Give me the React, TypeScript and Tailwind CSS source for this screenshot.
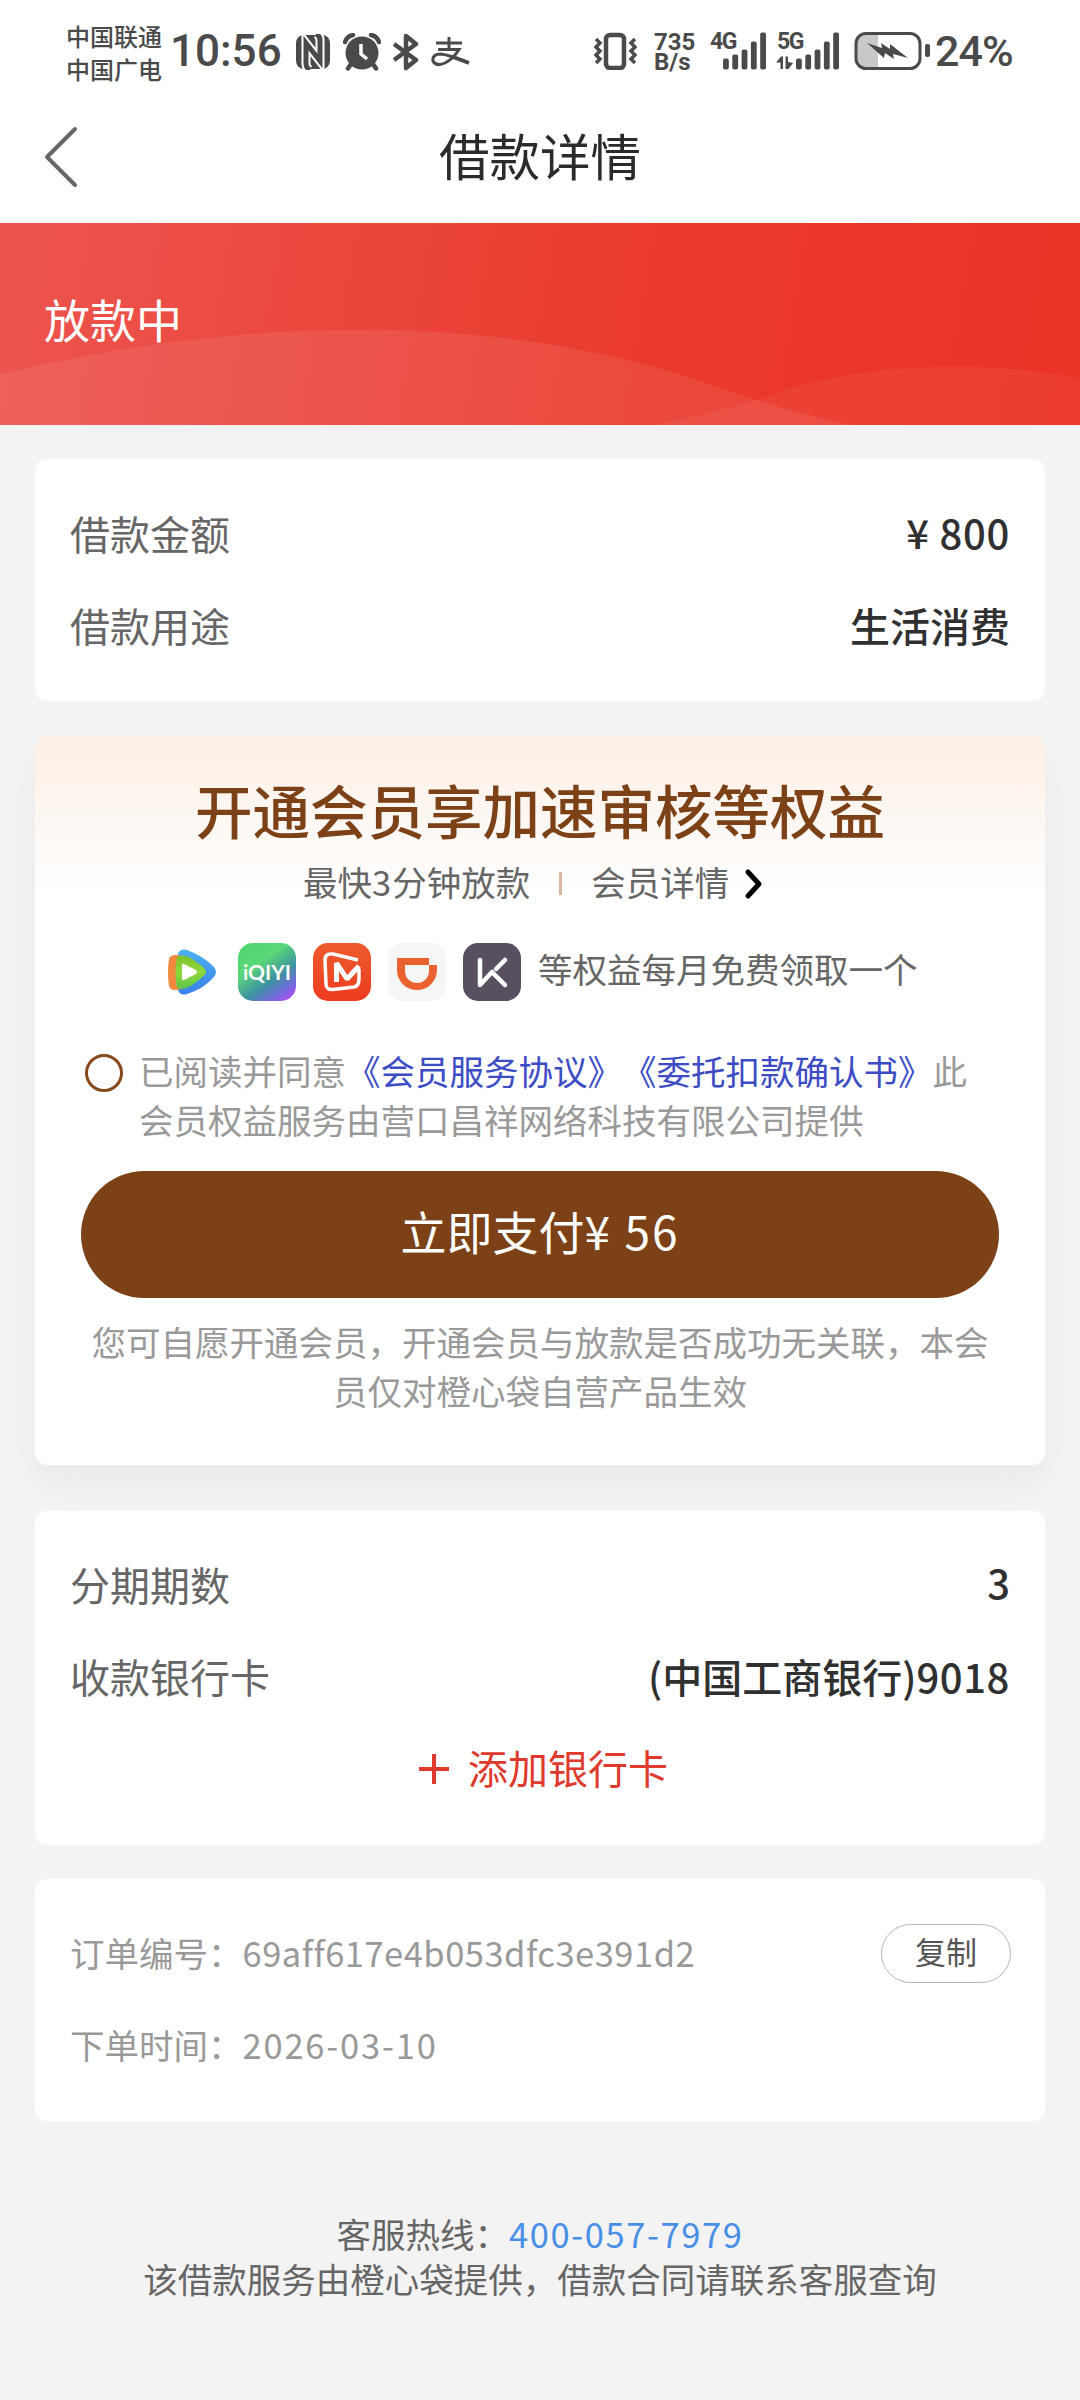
import clsx from "clsx";
import React from "react";

const Signal = ({ label, data }: { label: string; data?: boolean }) => {
   const bars = [11, 15, 20, 28, 37];
   return (
      <div className="w-[64px] h-[38px] flex">
         <div className="w-[13px]">
            <p className="text-[23px] leading-[19px] font-bold tracking-[-1.500px]">
               {label}
            </p>
            {data && (
               <svg width="17" height="14" viewBox="0 0 17 14" fill="currentColor" className="mt-[5px] -ml-px max-w-none">
                  <path d="M0 6.500L5 0.500H7V13H4.500V6.500ZM9.500 0.500H12V6L17 7L12.500 13H9.500Z" />
               </svg>
            )}
         </div>
         <svg
            width="44"
            height="38"
            viewBox="0 0 44 38"
            fill="currentColor"
            className={data ? "ml-[6px]" : ""}
         >
            {bars.map((h, i) => (
               <rect
                  key={h}
                  x={i * 9.3}
                  y={37.5 - h}
                  width="5.8"
                  height={h}
                  rx="2"
               />
            ))}
         </svg>
      </div>
   );
};

const StatusBar = () => {
   return (
      <div className="h-[90px] pl-[66px] pr-[68px] pt-[20px] flex items-start justify-between text-[#4a4a4a]">
         <div className="flex items-start">
            <div className="w-[104px] -mt-px text-[24px] leading-[33px] font-medium">
               <p>中国联通</p>
               <p>中国广电</p>
            </div>
            <span className="w-[125px] font-['Roboto'] text-[44px] leading-[62px] font-medium">
               10:56
            </span>
            <div className="flex items-center gap-[12px] pt-[13px]">
               <svg width="36" height="36" viewBox="0 0 36 36">
                  <rect x="1" y="1" width="34" height="34" rx="8" fill="currentColor" />
                  <path
                     d="M15 36Q11 34 11 30V9L25 27V6Q25 2 21 0"
                     fill="none"
                     stroke="#fff"
                     strokeWidth="9"
                  />
                  <path
                     d="M15 36Q11 34 11 30V9L25 27V6Q25 2 21 0"
                     fill="none"
                     stroke="currentColor"
                     strokeWidth="5"
                  />
               </svg>
               <svg width="38" height="38" viewBox="0 0 38 38">
                  <circle cx="19" cy="20" r="16.5" fill="currentColor" />
                  <path
                     d="M2 9Q4 3 10 2M36 9Q34 3 28 2M8 31L5 35.500M30 31L33 35.500"
                     fill="none"
                     stroke="currentColor"
                     strokeWidth="4.500"
                     strokeLinecap="round"
                  />
                  <path
                     d="M18 11V21L24 26"
                     fill="none"
                     stroke="#fff"
                     strokeWidth="3.500"
                  />
               </svg>
               <svg
                  width="26"
                  height="38"
                  viewBox="0 0 26 38"
                  fill="none"
                  stroke="currentColor"
                  strokeWidth="4.500"
                  strokeLinejoin="round"
               >
                  <path d="M1 11L23 27L13 35V3L23 11L1 27" />
               </svg>
               <svg
                  width="39"
                  height="30"
                  viewBox="0 0 39 30"
                  fill="none"
                  stroke="currentColor"
                  strokeWidth="3"
               >
                  <path d="M5 6H31M18 0V12M7 12.500H28Q22 22 14 26Q5 30 2 24Q1 17 10 17Q18 18 36 25" />
                  <path d="M22 20L38 26" strokeWidth="4" />
               </svg>
            </div>
         </div>
         <div className="flex items-start pt-[12px]">
            <svg
               width="43"
               height="38"
               viewBox="0 0 43 38"
               fill="none"
               stroke="currentColor"
               className="mr-[17px]"
            >
               <rect x="12" y="3" width="18" height="33" rx="4" strokeWidth="4.500" />
               <path
                  d="M2 7L6 11L2 15L6 19L2 23L6 27L2 31M41 7L37 11L41 15L37 19L41 23L37 27L41 31"
                  strokeWidth="3.500"
               />
            </svg>
            <div className="w-[56px] font-['Roboto'] text-[24px] leading-[20px] font-bold">
               <p>735</p>
               <p>B/s</p>
            </div>
            <div className="w-[67px] font-['Roboto']">
               <Signal label="4G" />
            </div>
            <div className="w-[77px] font-['Roboto']">
               <Signal label="5G" data />
            </div>
            <svg width="78" height="38" viewBox="0 0 78 38" className="mr-[3px]">
               <path d="M11 3H24V35H11Q3 35 3 27V11Q3 3 11 3Z" fill="#c8c8c8" />
               <rect
                  x="2"
                  y="1.500"
                  width="64"
                  height="35"
                  rx="10"
                  fill="none"
                  stroke="currentColor"
                  strokeWidth="3"
               />
               <rect x="71" y="12" width="5" height="13" rx="2" fill="currentColor" />
               <path
                  d="M13 11L28 16L27 11L36 17L36 12L54 26L39 22L40 27L31 21L30 26Z"
                  fill="currentColor"
               />
            </svg>
            <span className="w-[77px] -mt-[12px] font-['Roboto'] text-[43px] leading-[62px] font-medium tracking-[-1px]">
               24%
            </span>
         </div>
      </div>
   );
};

const Header = () => {
   return (
      <div className="h-[133px] px-[44px] flex items-center">
         <svg
            width="35"
            height="64"
            viewBox="0 0 35 64"
            fill="none"
            stroke="#666"
            strokeWidth="4"
            strokeLinecap="round"
            strokeLinejoin="round"
         >
            <path d="M31 4L3 32L31 60" />
         </svg>
         <h1 className="flex-1 pr-[35px] pb-[6px] text-center text-[50.500px] leading-[60px] text-[#2b2b2b]">
            借款详情
         </h1>
      </div>
   );
};

const Banner = () => {
   return (
      <div className="relative h-[202px] bg-linear-[100deg,#ec554e_0%,#ea3a2d_60%,#eb3225_100%]">
         <svg
            width="1080"
            height="202"
            viewBox="0 0 1080 202"
            fill="#fff"
            fillOpacity="0.08"
            className="absolute inset-0"
         >
            <path d="M0 151C220 98 480 84 700 158Q790 190 852 202H0Z" />
            <path d="M655 202Q705 192 760 176C860 137 980 137 1080 155V202Z" fillOpacity="0.05" />
         </svg>
         <p className="relative pl-[44px] pt-[64px] text-[46px] leading-[62px] text-white">
            放款中
         </p>
      </div>
   );
};

const Card = ({
   className,
   children,
}: {
   className?: string;
   children: React.ReactNode;
}) => {
   return (
      <div className={clsx("mx-[35px] rounded-[12px] bg-white", className)}>
         {children}
      </div>
   );
};

const Row = ({ label, value }: { label: string; value: React.ReactNode }) => {
   return (
      <div className="h-[92px] flex items-center justify-between text-[40px] whitespace-nowrap">
         <span className="text-[#666]">{label}</span>
         <span className="text-[#303030] font-medium">{value}</span>
      </div>
   );
};

const AppIcons = () => {
   return (
      <div className="flex gap-[17px]">
         <svg width="58" height="58" viewBox="0 0 58 58">
            <defs>
               <linearGradient id="blue" x1="0" y1="0" x2="0" y2="1">
                  <stop offset="0" stopColor="#4cb0f0" />
                  <stop offset="1" stopColor="#3a80ea" />
               </linearGradient>
               <linearGradient id="green" x1="0" y1="0" x2="0" y2="1">
                  <stop offset="0" stopColor="#7fc02e" />
                  <stop offset="0.5" stopColor="#8fd93a" />
                  <stop offset="1" stopColor="#5cc44a" />
               </linearGradient>
            </defs>
            <path d="M15 11Q17 5 24 7Q40 13 50 23Q56 29 50 35Q40 46 24 51Q17 53 15 47Q12 29 15 11Z" fill="url(#blue)" />
            <path d="M6 16Q7 12 13 12Q19 12 25 15V43Q18 47 12 47Q7 47 6 43Q4 29 6 16Z" fill="#f18a3c" />
            <path d="M14 14Q22 10 32 18Q44 26 43 29Q43 32 32 40Q22 48 14 45Q11 29 14 14Z" fill="url(#green)" />
            <path d="M19 22Q19 20 21 21L33 27Q35 29 33 31L21 37Q19 38 19 36Z" fill="#fff" />
         </svg>
         <div className="size-[58px] rounded-[15px] flex items-center justify-center bg-linear-[145deg,#4fd670_0%,#5ad878_35%,#3d92a0_62%,#6f6cd8_80%,#b04cf5_94%] text-white">
            <span className="font-['Lato'] text-[21px] leading-[58px] font-bold">
               iQIYI
            </span>
         </div>
         <svg
            width="58"
            height="58"
            viewBox="0 0 58 58"
            className="rounded-[15px] bg-linear-to-b from-[#ec5a2c] to-[#ee3a20]"
            fill="none"
            stroke="#fff"
         >
            <path d="M45 17L20 11Q12 10 12 17L13 41Q13 47 20 46.500L41 44Q46 43 46 36V26" strokeWidth="3.500" />
            <path d="M23.500 39V20L34 36L46 23" strokeWidth="5" strokeLinejoin="bevel" />
         </svg>
         <svg
            width="58"
            height="58"
            viewBox="0 0 58 58"
            className="rounded-[15px] bg-[#f6f6f6]"
         >
            <path d="M9 15H41V22H49V27A20 20 0 0 1 9 27Z" fill="#ea6230" />
            <path d="M17 22H41V28A12 12 0 0 1 17 28Z" fill="#f6f6f6" />
         </svg>
         <svg
            width="58"
            height="58"
            viewBox="0 0 58 58"
            className="rounded-[15px] bg-[#584f60]"
            fill="none"
            stroke="#fff"
            strokeWidth="4.500"
            strokeLinecap="round"
            strokeLinejoin="round"
         >
            <path d="M17 17V42L29 29L42 42M33 26L42 17" />
         </svg>
      </div>
   );
};

const MemberCard = () => {
   return (
      <Card className="mt-[35px] h-[729px] pt-[38px] bg-linear-to-b from-[#fcefe5] to-white to-[160px] shadow-[0_20px_40px_rgba(0,0,0,0.04)]">
         <h2 className="text-center text-[57.500px] leading-[70px] font-medium text-[#7c4116]">
            开通会员享加速审核等权益
         </h2>
         <div className="mt-[13px] h-[50px] pl-[268px] flex items-center text-[34.500px] text-[#666]">
            <span>
               最快<span className="tracking-[1px]">3</span>分钟放款
            </span>
            <span className="ml-[29px] mr-[29px] mt-[2px] w-[3px] h-[23px] bg-[#d8b8a2]"></span>
            <span>会员详情</span>
            <svg
               width="20"
               height="32"
               viewBox="0 0 20 32"
               className="ml-[15px] mt-[4px]"
               fill="none"
               stroke="#000"
               strokeWidth="5"
               strokeLinecap="round"
               strokeLinejoin="round"
            >
               <path d="M4 4L15 16L4 28" />
            </svg>
         </div>
         <div className="mt-[36px] pl-[128px] flex items-center">
            <AppIcons />
            <span className="ml-[17px] text-[34.500px] leading-[50px] -mt-[8px] text-[#666]">
               等权益每月免费领取一个
            </span>
         </div>
         <div className="mt-[45px] pl-[50px] flex items-start">
            <span className="mt-[8px] size-[38px] rounded-full border-[3px] border-[#85491d]"></span>
            <p className="ml-[16px] text-[34.500px] leading-[49px] text-[#999] whitespace-nowrap [text-spacing-trim:space-all]">
               已阅读并同意
               <span className="text-[#3c4cc4]">
                  《会员服务协议》《委托扣款确认书》
               </span>
               此<br />
               会员权益服务由营口昌祥网络科技有限公司提供
            </p>
         </div>
         <button className="mt-[27px] ml-[46px] w-[918px] h-[127px] pb-[9px] rounded-full bg-[#7c4116] text-white text-[46px]">
            立即支付<span className="tracking-[2px]">¥ 56</span>
         </button>
         <p className="mt-[19px] text-center text-[34.500px] leading-[49px] text-[#999] [text-spacing-trim:space-all]">
            您可自愿开通会员，开通会员与放款是否成功无关联，本会
            <br />
            员仅对橙心袋自营产品生效
         </p>
      </Card>
   );
};

const App = () => {
   return (
      <div className="w-[1080px] h-[2400px] overflow-hidden bg-[#f3f3f3] font-['Noto_Sans_CJK_SC',sans-serif]">
         <div className="bg-white">
            <StatusBar />
            <Header />
         </div>
         <Banner />
         <Card className="mt-[34px] h-[242px] px-[35px] pt-[28px]">
            <Row
               label="借款金额"
               value={<p className="pb-[3px] tracking-[0.7px]">¥ 800</p>}
            />
            <Row label="借款用途" value="生活消费" />
         </Card>
         <MemberCard />
         <Card className="mt-[46px] h-[334px] px-[35px] pt-[27px]">
            <Row label="分期期数" value={<p className="pb-[4px]">3</p>} />
            <Row
               label="收款银行卡"
               value={
                  <>
                     (中国工商银行)<span className="tracking-[0.6px]">9018</span>
                  </>
               }
            />
            <div className="h-[90px] pl-[349px] flex items-center text-[40px] text-[#de3a2e]">
               <svg
                  width="30"
                  height="32"
                  viewBox="0 0 30 32"
                  className="mr-[19px] mt-[4px]"
                  stroke="currentColor"
                  strokeWidth="4"
               >
                  <path d="M0 16H30M15 1V31" />
               </svg>
               <span>添加银行卡</span>
            </div>
         </Card>
         <Card className="mt-[34px] h-[242px] pl-[35px] pr-[34px] pt-[28px] text-[34.500px] text-[#999]">
            <div className="h-[92px] flex items-center justify-between">
               <span className="flex">
                  订单编号：
                  <span className="tracking-[0.5px]">
                     69aff617e4b053dfc3e391d2
                  </span>
               </span>
               <button className="w-[130px] h-[59px] pb-[4px] rounded-full border border-[#b5b5b5] text-[31px] leading-[50px] text-[#555]">
                  复制
               </button>
            </div>
            <div className="h-[92px] flex items-center">
               下单时间：<span className="tracking-[1.800px]">2026-03-10</span>
            </div>
         </Card>
         <div className="mt-[90px] text-center text-[34.500px] leading-[45px] text-[#666]">
            <p>
               客服热线：
               <span className="text-[#4a8fe6] tracking-[1.600px]">
                  400-057-7979
               </span>
            </p>
            <p>该借款服务由橙心袋提供，借款合同请联系客服查询</p>
         </div>
      </div>
   );
};

export default App;
